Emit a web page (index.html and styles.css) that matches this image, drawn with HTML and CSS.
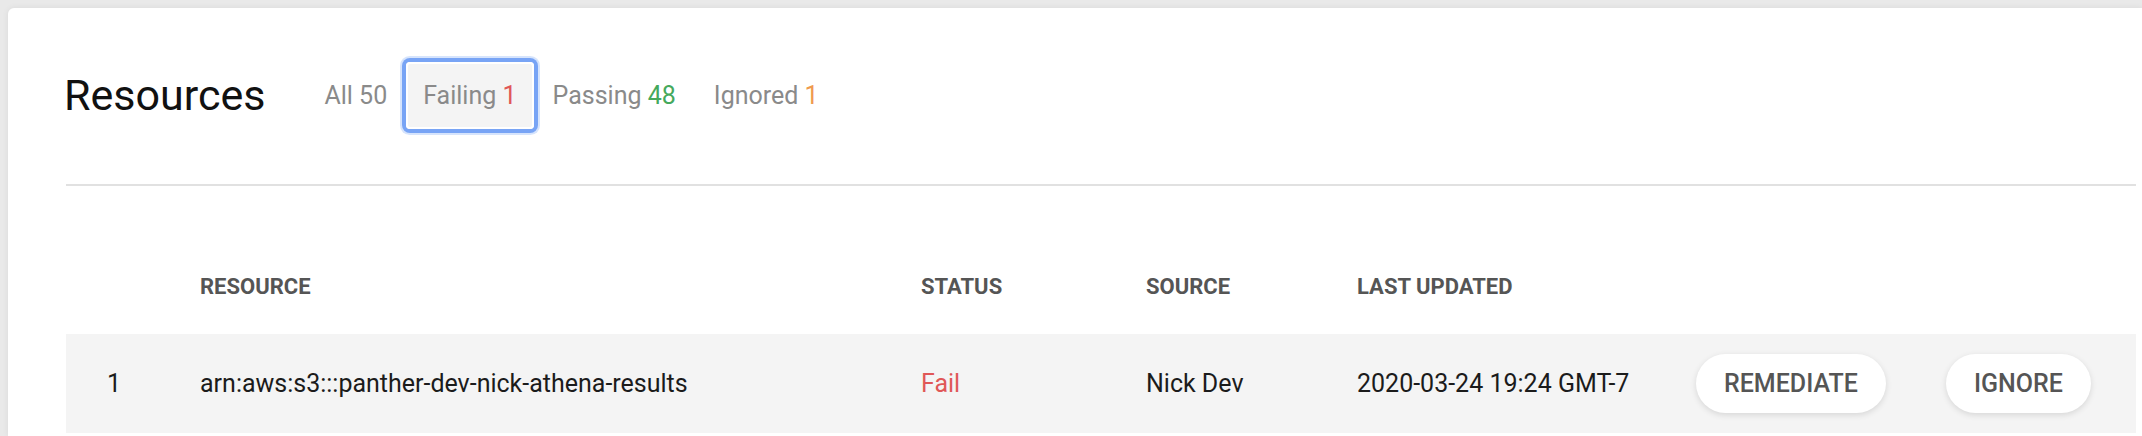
FILE: index.html
```html
<!DOCTYPE html>
<html>
<head>
<meta charset="utf-8">
<link rel="stylesheet" href="styles.css">
</head>
<body>
<div class="card">
  <div class="top">
    <h1 class="title">Resources</h1>
    <div class="tabs">
      <button class="tab">All <span class="n-all">50</span></button>
      <button class="tab tab-active">Failing <span class="n-fail">1</span></button>
      <button class="tab">Passing <span class="n-pass">48</span></button>
      <button class="tab">Ignored <span class="n-ign">1</span></button>
    </div>
  </div>
  <div class="divider"></div>
  <div class="table">
    <div class="row head">
      <div class="cell idx"></div>
      <div class="cell">RESOURCE</div>
      <div class="cell">STATUS</div>
      <div class="cell">SOURCE</div>
      <div class="cell">LAST UPDATED</div>
      <div class="cell"></div>
    </div>
    <div class="row data">
      <div class="cell idx">1</div>
      <div class="cell">arn:aws:s3:::panther-dev-nick-athena-results</div>
      <div class="cell fail">Fail</div>
      <div class="cell">Nick Dev</div>
      <div class="cell">2020-03-24 19:24 GMT-7</div>
      <div class="cell actions">
        <button class="pill">REMEDIATE</button>
        <button class="pill">IGNORE</button>
      </div>
    </div>
  </div>
</div>
</body>
</html>
```
FILE: styles.css
```css
* { box-sizing: border-box; }
html, body { margin: 0; }
body {
  background: #e9e9e9;
  padding: 8px 0 0 8px;
  overflow: hidden;
  font-family: Roboto, "Liberation Sans", sans-serif;
  height: 436px;
}
.card {
  background: #fff;
  border-radius: 6px 0 0 0;
  padding: 51px 6px 0 58px;
  box-shadow: 0 0 6px rgba(0,0,0,0.07);
  height: 428px;
}
.top {
  display: flex;
  align-items: center;
  height: 73px;
}
.title {
  margin: 0 0 0 -2px;
  font-size: 43px;
  font-weight: 400;
  color: #111;
  line-height: 1;
}
.tabs {
  display: flex;
  margin-left: 40px;
}
.tab {
  border: 0;
  background: transparent;
  font-family: inherit;
  font-size: 25px;
  color: #8a8a8a;
  height: 67px;
  padding: 0 19px;
  border-radius: 4px;
}
.tab-active {
  background: #f4f4f4;
  padding: 0 17px;
  box-shadow: inset 0 0 0 2px #fff, 0 0 0 4px #78a4f5, 0 0 0 6px rgba(120,164,245,0.3);
}
.n-all { color: #8a8a8a; }
.n-fail { color: #e05757; }
.n-pass { color: #45a95c; }
.n-ign { color: #ef9a4e; }
.divider {
  margin-top: 52px;
  height: 2px;
  background: #e1e1e1;
}
.table { margin-top: 52px; }
.row {
  display: grid;
  grid-template-columns: 134px 721px 225px 211px 339px 1fr;
  align-items: center;
}
.head {
  height: 96px;
  font-size: 22px;
  font-weight: 700;
  color: #555;
}
.data {
  height: 99px;
  background: #f4f4f4;
  font-size: 25px;
  color: #1b1b1b;
}
.idx { padding-left: 41px; }
.fail { color: #e05757; }
.actions {
  display: flex;
  gap: 60px;
}
.pill {
  height: 59px;
  border: 0;
  border-radius: 30px;
  background: #fff;
  font-family: inherit;
  font-size: 25px;
  font-weight: 500;
  color: #555;
  padding: 0 28px;
  box-shadow: 0 2px 6px rgba(0,0,0,0.12);
}
```
